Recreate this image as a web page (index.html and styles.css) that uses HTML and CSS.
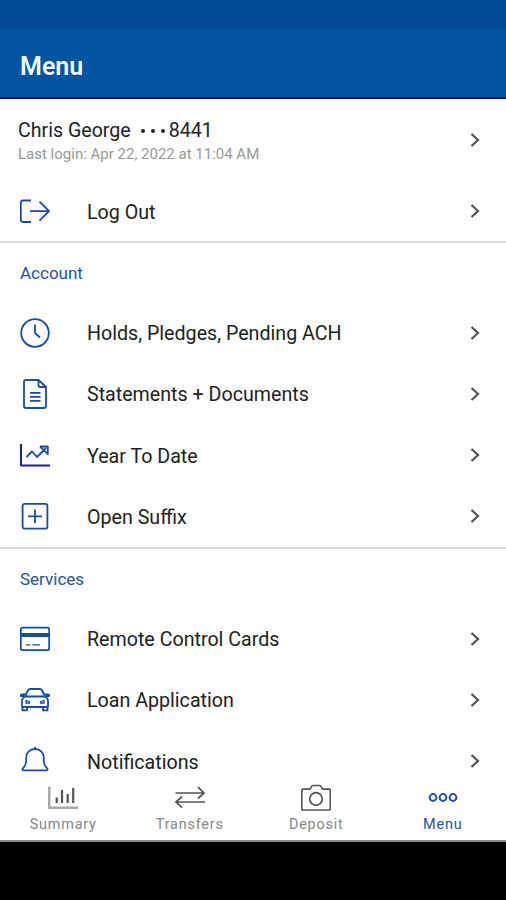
FILE: index.html
```html
<!DOCTYPE html>
<html lang="en">
<head>
  <meta charset="utf-8">
  <title>Menu</title>
  <meta name="viewport" content="width=device-width, initial-scale=1.0">
  <link rel="stylesheet" href="styles.css">
</head>
<body>
  <svg width="0" height="0" class="defs">
    <symbol id="chevron" viewBox="0 0 10 16"><path d="M1.5 2 L8 8 L1.5 14"/></symbol>
  </svg>

  <div class="status-bar"></div>
  <header class="header"><h1>Menu</h1></header>

  <main class="list">
    <a class="profile">
      <div class="profile-info">
        <div class="profile-name"><span>Chris George</span><span class="dots"><i></i><i></i><i></i></span><span>8441</span></div>
        <div class="last-login">Last login: Apr 22, 2022 at 11:04 AM</div>
      </div>
      <svg class="chevron"><use href="#chevron"/></svg>
    </a>
    <a class="row logout">
      <svg class="icon" viewBox="0 0 30 30"><path d="M11 4.5H3Q.8 4.5 .8 6.7V23.8Q.8 26 3 26H11M10 15.2H29M19.5 5.7L29 15.2L19.5 24.7"/></svg>
      <span class="label">Log Out</span>
      <svg class="chevron"><use href="#chevron"/></svg>
    </a>

    <section>
      <h2>Account</h2>
      <a class="row">
        <svg class="icon" viewBox="0 0 30 30"><circle cx="15" cy="15" r="13.8"/><path d="M15 6.5V15L20 19.5"/></svg>
        <span class="label">Holds, Pledges, Pending ACH</span>
        <svg class="chevron"><use href="#chevron"/></svg>
      </a>
      <a class="row">
        <svg class="icon" viewBox="0 0 30 30"><path d="M18.5 1H6Q4 1 4 3V27Q4 29 6 29H24Q26 29 26 27V8L18.5 1V6Q18.5 8 20.5 8H26M10 13.8H20.5M10 17.8H20.5M10 21.8H20.5"/></svg>
        <span class="label">Statements + Documents</span>
        <svg class="chevron"><use href="#chevron"/></svg>
      </a>
      <a class="row">
        <svg class="icon" viewBox="0 0 30 30"><path d="M1 4V25.5H30" class="axis"/><path d="M6.5 17L12 11.5L17 17L26 8M20 6.5H27.8V14.2L20 6.5"/></svg>
        <span class="label">Year To Date</span>
        <svg class="chevron"><use href="#chevron"/></svg>
      </a>
      <a class="row">
        <svg class="icon" viewBox="0 0 30 30"><rect x="2.6" y="2.9" width="24.8" height="24.8" rx="2"/><path d="M15 8.5V22.1M8 15.3H22"/></svg>
        <span class="label">Open Suffix</span>
        <svg class="chevron"><use href="#chevron"/></svg>
      </a>
    </section>

    <section>
      <h2>Services</h2>
      <a class="row">
        <svg class="icon" viewBox="0 0 30 30"><rect x=".8" y="3.6" width="28.4" height="22.6" rx="2"/><path d="M1 11H29" class="stripe"/><path d="M6 20.8H10.5M12.5 20.8H20" class="thin"/></svg>
        <span class="label">Remote Control Cards</span>
        <svg class="chevron"><use href="#chevron"/></svg>
      </a>
      <a class="row">
        <svg class="icon" viewBox="0 0 30 30">
          <path d="M5 11.5L7.8 5.5Q8.5 4 10.5 4H19.5Q21.5 4 22.2 5.5L25 11.5Z"/>
          <path d="M5 11.5Q2 13 2 16V22H28V16Q28 13 25 11.5M2.5 22V25.4H7V22M23 22V25.4H27.5V22M5.5 9.5H2Q.8 9.5 .8 11H4M24.5 9.5H28Q29.2 9.5 29.2 11H26"/>
          <path d="M6 15.5V18H9.5V16.5ZM24 15.5V18H20.5V16.5Z" class="thin"/>
        </svg>
        <span class="label">Loan Application</span>
        <svg class="chevron"><use href="#chevron"/></svg>
      </a>
      <a class="row">
        <svg class="icon" viewBox="0 0 30 30"><path d="M15 .8V3M15 3C9.5 3 6.2 7 6.2 11.5V15C6.2 19 5 20 3.2 21.8C1.8 23.4 2.2 24.4 4 24.4H26C27.8 24.4 28.2 23.4 26.8 21.8C25 20 23.8 19 23.8 15V11.5C23.8 7 20.5 3 15 3Z"/></svg>
        <span class="label">Notifications</span>
        <svg class="chevron"><use href="#chevron"/></svg>
      </a>
    </section>
  </main>

  <nav class="tabs">
    <a class="tab">
      <svg viewBox="0 0 30 28"><path d="M1.2 2.5V23.7H30" class="tab-axis"/><path d="M8.7 19V13.5M14 19V6M19.7 19V10M25.2 19V4" class="bars"/></svg>
      <span>Summary</span>
    </a>
    <a class="tab">
      <svg viewBox="0 0 30 28"><path d="M.5 9H29M23 3.2L29 9L23 14.5M30 18H1M7 12.5L1 18L7 23.7"/></svg>
      <span>Transfers</span>
    </a>
    <a class="tab">
      <svg viewBox="0 0 30 28"><path d="M2 5.2H8.5Q9.5 5.2 10 3.5Q10.5 1.5 12 1.5H18.5Q20 1.5 20.5 3.5Q21 5.2 22 5.2H28Q29.3 5.2 29.3 6.5V24.5Q29.3 26 28 26H2Q.8 26 .8 24.5V6.5Q.8 5.2 2 5.2Z"/><circle cx="15" cy="15" r="6.3"/></svg>
      <span>Deposit</span>
    </a>
    <a class="tab active">
      <svg viewBox="0 0 30 28"><circle cx="5" cy="13.5" r="3.4"/><circle cx="15" cy="13.5" r="3.4"/><circle cx="25" cy="13.5" r="3.4"/></svg>
      <span>Menu</span>
    </a>
  </nav>
  <div class="system-bar"></div>
</body>
</html>
```
FILE: styles.css
```css
* {
  box-sizing: border-box;
}
body {
  margin: 0;
  height: 900px;
  display: flex;
  flex-direction: column;
  overflow: hidden;
  background: #fefefe;
  color: #222;
  font-family: Roboto, "Liberation Sans", sans-serif;
}
svg {
  fill: none;
  stroke: currentColor;
  flex-shrink: 0;
}
.defs {
  display: none;
}
.status-bar {
  height: 30px;
  flex-shrink: 0;
  background: #004a94;
}
.header {
  height: 69px;
  flex-shrink: 0;
  display: flex;
  align-items: center;
  padding: 5px 20px 0;
  background: #0054a0;
  border-bottom: 2px solid #00088c;
}
.header h1 {
  margin: 0;
  font-size: 25px;
  font-weight: 600;
  color: #f4f8ff;
}

/* menu list */
.list {
  flex: 1;
  min-height: 0;
  overflow: hidden;
}
.profile {
  height: 82px;
  display: flex;
  align-items: center;
  justify-content: space-between;
  padding: 0 26px 0 18px;
}
.profile-info {
  padding-top: 4px;
}
.profile-name {
  display: flex;
  align-items: center;
  font-size: 19.6px;
  line-height: 24px;
}
.dots {
  display: flex;
  gap: 6px;
  margin: 0 4px 0 10px;
}
.dots i {
  width: 4px;
  height: 4px;
  border-radius: 50%;
  background: #222;
}
.last-login {
  font-size: 15px;
  line-height: 22px;
  color: #999;
}
.row {
  height: 61.25px;
  display: flex;
  align-items: center;
  padding: 0 26px 0 20px;
}
.logout {
  height: 60px;
}
.icon {
  width: 30px;
  height: 30px;
  margin-right: 37px;
  color: #174da5;
  stroke-width: 1.8;
  stroke-linejoin: round;
}
.icon .axis {
  stroke: #1a1f9c;
  stroke-width: 2;
}
.icon .stripe {
  stroke-width: 4;
}
.icon .thin {
  stroke-width: 1.3;
}
.label {
  flex: 1;
  padding-top: 2px;
  font-size: 19.65px;
}
.chevron {
  width: 10px;
  height: 16px;
  color: #555;
  stroke-width: 2.2;
}
section {
  border-top: 2px solid #dcdcdc;
}
h2 {
  height: 59px;
  margin: 0;
  padding: 0 20px;
  line-height: 60px;
  font-size: 17px;
  font-weight: 400;
  color: #2355a5;
}

/* bottom tabs */
.tabs {
  height: 62px;
  flex-shrink: 0;
  display: grid;
  grid-template-columns: repeat(4, 1fr);
  background: #fefefe;
  border-bottom: 2px solid #888;
}
.tab {
  display: flex;
  flex-direction: column;
  align-items: center;
  padding-top: 4px;
  font-size: 14.4px;
  line-height: 18px;
  letter-spacing: 0.8px;
  color: #888;
}
.tab svg {
  width: 30px;
  height: 28px;
  margin-bottom: 4px;
  color: #555;
  stroke-width: 1.7;
}
.tab svg .tab-axis {
  stroke: #aaa;
  stroke-width: 2.6;
}
.tab svg .bars {
  stroke-width: 2.2;
}
.tab.active, .tab.active svg {
  color: #2355a5;
}
.tab.active svg {
  stroke-width: 2;
}
.system-bar {
  height: 58px;
  flex-shrink: 0;
  background: #000;
}
```
